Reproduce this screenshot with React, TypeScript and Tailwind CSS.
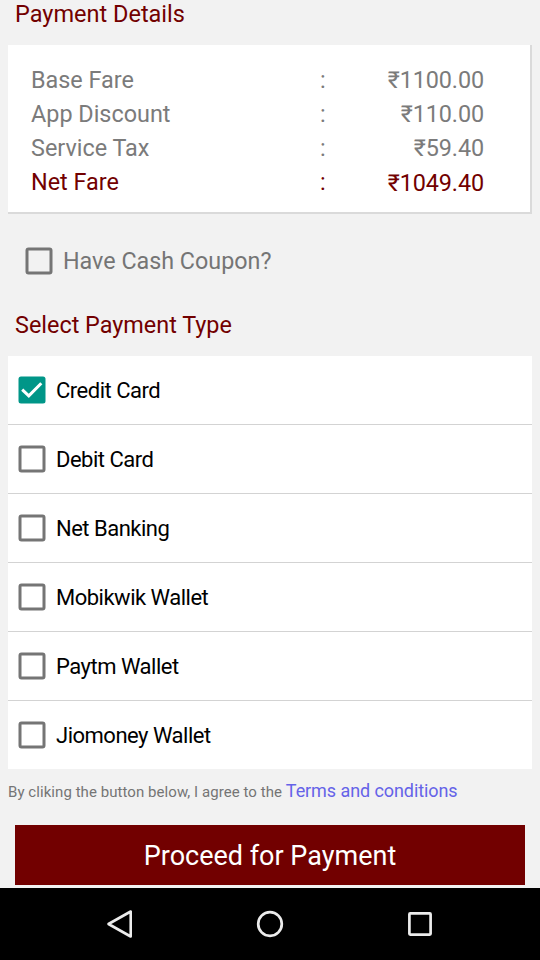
import clsx from "clsx"

interface Fare {
  label: string
  amount: string
  total?: boolean
}

const fares: Fare[] = [
  { label: "Base Fare", amount: "₹1100.00" },
  { label: "App Discount", amount: "₹110.00" },
  { label: "Service Tax", amount: "₹59.40" },
  { label: "Net Fare", amount: "₹1049.40", total: true },
]

const paymentTypes = [
  "Credit Card",
  "Debit Card",
  "Net Banking",
  "Mobikwik Wallet",
  "Paytm Wallet",
  "Jiomoney Wallet",
]

function Checkbox({ checked }: { checked?: boolean }) {
  return (
    <svg width="28" height="28" viewBox="0 0 28 28" fill="none" className="shrink-0">
      {checked ? (
        <>
          <rect x="0.5" y="0.5" width="27" height="27" rx="2.5" fill="#009688" />
          <path d="M4.2 13.7 L10.8 19.8 L23.3 7.2" stroke="#fff" strokeWidth="3" />
        </>
      ) : (
        <rect x="2" y="2" width="24" height="24" rx="1.5" stroke="#757575" strokeWidth="3" />
      )}
    </svg>
  )
}

function FareTable() {
  return (
    <div className="mx-2 mt-[17px] h-[169px] bg-white border-r-2 border-b-2 border-[#dadada] pl-[23px] pr-[46px] pt-[18px]">
      {fares.map((fare) => (
        <div
          key={fare.label}
          className={clsx(
            "flex h-[34px] leading-[34px] text-[23.4px]",
            fare.total ? "text-[#720000]" : "text-[#7b7b7b]"
          )}
        >
          <span className="w-[289px]">{fare.label}</span>
          <span>:</span>
          <span className={clsx("ml-auto tracking-[-0.1px]", fare.total && "pt-px")}>{fare.amount}</span>
        </div>
      ))}
    </div>
  )
}

function NavBar() {
  return (
    <nav className="mt-[3px] h-[72px] bg-black flex items-center justify-center gap-[114px]">
      <svg width="36" height="36" viewBox="0 0 36 36" fill="none" stroke="#ececec" strokeWidth="2.6" strokeLinejoin="round">
        <path d="M6.5 18 L28.7 5.5 V30.5 Z" />
      </svg>
      <svg width="36" height="36" viewBox="0 0 36 36" fill="none" stroke="#ececec" strokeWidth="2.7">
        <circle cx="18" cy="18" r="11.8" />
      </svg>
      <svg width="36" height="36" viewBox="0 0 36 36" fill="none" stroke="#ececec" strokeWidth="2.7">
        <rect x="7.4" y="7.4" width="21.2" height="21.2" rx="0.8" />
      </svg>
    </nav>
  )
}

export default function App() {
  return (
    <main className="w-[540px] h-[960px] overflow-hidden bg-[#f2f2f2] font-[Roboto,sans-serif]">
      <h1 className="pl-[15px] h-7 leading-[28px] text-[23.5px] text-[#720000]">Payment Details</h1>
      <FareTable />

      <label className="mt-[33px] ml-[25px] h-7 flex items-center gap-[10px] text-[23.3px] text-[#757575]">
        <Checkbox />
        <span>Have Cash Coupon?</span>
      </label>

      <h2 className="mt-[36px] pl-[15px] h-7 leading-[28px] text-[23.4px] text-[#720000]">Select Payment Type</h2>
      <div className="mt-[17px] mx-2 h-[413px] bg-white divide-y divide-[#d3d3d3]">
        {paymentTypes.map((type, index) => (
          <label
            key={type}
            className="h-[69px] last:h-[68px] px-[10px] flex items-center gap-[10px] text-[22px] tracking-[-0.5px] text-black"
          >
            <Checkbox checked={index === 0} />
            <span>{type}</span>
          </label>
        ))}
      </div>

      <p className="pl-2 h-[56px] leading-[44px] text-[15px] tracking-[0.06px] text-[#757575] whitespace-nowrap">
        By cliking the button below, I agree to the{" "}
        <a className="text-[18px] tracking-[-0.08px] text-[#6563e8]">Terms and conditions</a>
      </p>
      <button className="block mx-[15px] w-[510px] h-[60px] pt-0.5 bg-[#720000] text-white text-[27px]">
        Proceed for Payment
      </button>
      <NavBar />
    </main>
  )
}
